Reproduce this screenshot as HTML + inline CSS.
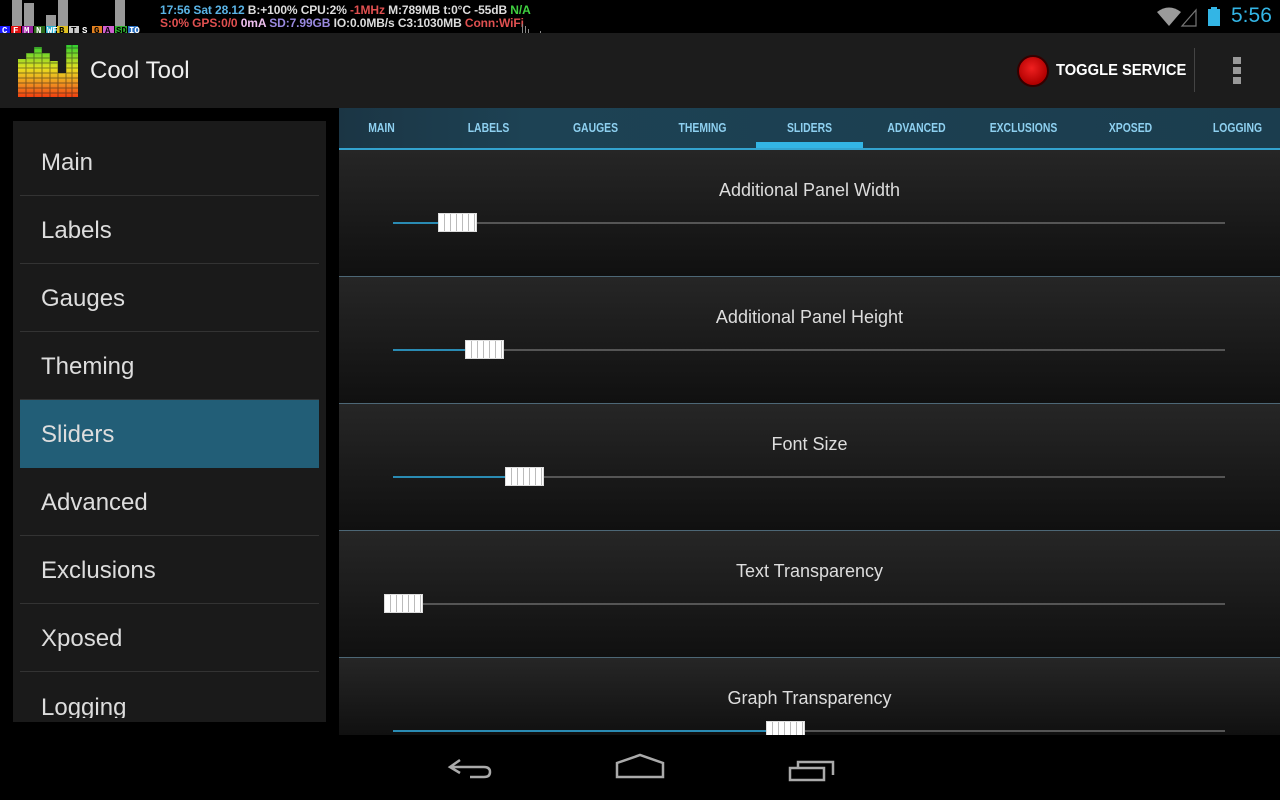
<!DOCTYPE html>
<html><head><meta charset="utf-8"><style>
*{margin:0;padding:0;box-sizing:border-box}
body{width:1280px;height:800px;background:#000;position:relative;overflow:hidden;font-family:"Liberation Sans",sans-serif}
.abs{position:absolute}
.sb{font-size:12px;font-weight:bold;white-space:nowrap;letter-spacing:-0.1px}
.ab{top:33px;left:0;width:1280px;height:75px;background:#1c1c1c}
.left{left:13px;top:121px;width:313px;height:601px;background:#1a1a1a;overflow:hidden}
.item{position:absolute;left:7px;width:299px;height:68px;border-bottom:1px solid #333;color:#ddd;font-size:24px;padding-left:21px;line-height:70px}
.sel{background:#225e77;border-bottom:none}
.tabs{left:339px;top:108px;width:941px;height:42px;background:linear-gradient(90deg,#1b3544,#1d4254 20%,#1b3d4e);border-bottom:2px solid #33a3cf}
.tab{position:absolute;top:0;width:107px;height:40px;line-height:40px;text-align:center;color:#8ed0f0;font-size:13px;font-weight:bold;transform:scaleX(.8)}
.panel{position:absolute;left:339px;width:941px;height:127px;background:linear-gradient(#262626,#101010);border-bottom:1px solid #4d6776}
.pt{position:absolute;top:30px;width:100%;text-align:center;color:#ddd;font-size:18px}
.track{position:absolute;left:54px;width:832px;top:72px;height:2px;background:#555}
.fill{position:absolute;left:0;top:0;height:2px;background:#2a8bb3}
.thumb{position:absolute;top:-9px;width:39px;height:19px;background:repeating-linear-gradient(90deg,#fff 0 5px,#bbb 5px 6px);border:1px solid #ddd}
</style></head><body>
<div class="abs" style="left:0;top:0;width:590px;height:33px;background:#000"></div>
<svg class="abs" style="left:0;top:0" width="160" height="34">
<g fill="#999">
<rect x="12" y="0" width="10" height="26"/><rect x="24" y="3" width="10" height="23"/><rect x="46" y="15" width="10" height="11"/><rect x="58" y="0" width="10" height="26"/><rect x="115" y="0" width="10" height="26"/>
</g>
<g font-family="Liberation Mono" font-size="9" font-weight="bold">
<rect x="0" y="26" width="10" height="8" fill="#1a1aff"/><rect x="11" y="26" width="10" height="8" fill="#e01010"/><rect x="22" y="26" width="11" height="8" fill="#9a1fa0"/><rect x="34" y="26" width="11" height="8" fill="#2a6a1a"/><rect x="46" y="26" width="10" height="8" fill="#2ab0d0"/><rect x="57" y="26" width="11" height="8" fill="#e0c020"/><rect x="69" y="26" width="10" height="8" fill="#ccc"/><rect x="92" y="26" width="10" height="8" fill="#e08020"/><rect x="103" y="26" width="11" height="8" fill="#d060d0"/><rect x="115" y="26" width="12" height="8" fill="#30b030"/><rect x="128" y="26" width="10" height="8" fill="#2a70c0"/>
<text x="2" y="33" fill="#fff">C</text><text x="13" y="33" fill="#fff">F</text><text x="24" y="33" fill="#fff">M</text><text x="36" y="33" fill="#fff">N</text><text x="47" y="33" fill="#fff">WF</text><text x="59" y="33" fill="#000">B</text><text x="71" y="33" fill="#000">T</text><text x="82" y="33" fill="#fff">S</text><text x="94" y="33" fill="#000">G</text><text x="105" y="33" fill="#000">A</text><text x="116" y="33" fill="#000">SD</text><text x="129" y="33" fill="#fff">IO</text>
</g></svg>
<div class="abs sb" style="left:160px;top:3px;color:#ddd"><span style="color:#5ab4e6">17:56 Sat 28.12</span> B:+100% CPU:2% <span style="color:#e05050">-1MHz</span> M:789MB t:0°C -55dB <span style="color:#40d040">N/A</span></div>
<div class="abs sb" style="left:160px;top:16px;color:#ddd"><span style="color:#e05050">S:0% GPS:0/0</span> <span style="color:#f0c0f0">0mA</span> <span style="color:#9a8ae0">SD:7.99GB</span> IO:0.0MB/s C3:1030MB <span style="color:#e05050">Conn:WiFi</span></div>
<svg class="abs" style="left:520px;top:20px" width="40" height="13"><g fill="#888"><rect x="2" y="4" width="1" height="9"/><rect x="5" y="6" width="1" height="7"/><rect x="8" y="9" width="1" height="4"/><rect x="20" y="11" width="1" height="2"/></g></svg>
<svg class="abs" style="left:1155px;top:6px" width="90" height="22">
<path d="M2 6 Q14 -3 26 6 L14 20 Z" fill="#9a9a9a"/>
<path d="M27 20 L41 4 L41 20 Z" fill="none" stroke="#777" stroke-width="1.2"/>
<rect x="53" y="3" width="12" height="17" fill="#33b5e5"/><rect x="56" y="1" width="6" height="3" fill="#33b5e5"/>
</svg>
<div class="abs" style="left:1231px;top:4px;color:#33b5e5;font-size:21px">5:56</div>
<div class="abs ab"></div>
<svg class="abs" style="left:16px;top:43px" width="64" height="56">
<defs><linearGradient id="lg" x1="0" y1="0" x2="0" y2="1"><stop offset="0" stop-color="#30d030"/><stop offset=".45" stop-color="#e8e020"/><stop offset=".75" stop-color="#f09020"/><stop offset="1" stop-color="#f04010"/></linearGradient></defs>
<path d="M2 54 L2 16 L10 16 L10 10 L18 10 L18 4 L26 4 L26 10 L34 10 L34 18 L42 18 L42 30 L50 30 L50 2 L62 2 L62 54 Z" fill="url(#lg)"/>
<g stroke="#1c1c1c" stroke-width="1" opacity=".5"><path d="M2 20H62M2 25H62M2 30H62M2 35H62M2 40H62M2 45H62M2 50H62M2 10H62M2 15H62M2 5H62M10 0V56M18 0V56M26 0V56M34 0V56M42 0V56M50 0V56M56 0V56"/></g>
</svg>
<div class="abs" style="left:90px;top:57px;color:#eee;font-size:24px">Cool Tool</div>
<div class="abs" style="left:1017px;top:55px;width:32px;height:32px;border-radius:50%;background:radial-gradient(circle at 45% 40%,#f02020,#b00000 70%);border:2px solid #300"></div>
<div class="abs" style="left:1056px;top:62px;color:#fff;font-size:16px;font-weight:bold;transform:scaleX(.92);transform-origin:left">TOGGLE SERVICE</div>
<div class="abs" style="left:1194px;top:48px;width:1px;height:44px;background:#444"></div>
<div class="abs" style="left:1233px;top:57px;width:8px;height:7px;background:#999"></div>
<div class="abs" style="left:1233px;top:67px;width:8px;height:7px;background:#999"></div>
<div class="abs" style="left:1233px;top:77px;width:8px;height:7px;background:#999"></div>
<div class="abs left">
<div class="item" style="top:7px">Main</div>
<div class="item" style="top:75px">Labels</div>
<div class="item" style="top:143px">Gauges</div>
<div class="item" style="top:211px">Theming</div>
<div class="item sel" style="top:279px">Sliders</div>
<div class="item" style="top:347px">Advanced</div>
<div class="item" style="top:415px">Exclusions</div>
<div class="item" style="top:483px">Xposed</div>
<div class="item" style="top:551px;border:none;line-height:72px">Logging</div>
<div class="abs" style="left:0;top:597px;width:313px;height:4px;background:#1a1a1a"></div>
</div>
<div class="abs tabs">
<div class="tab" style="left:-11px">MAIN</div>
<div class="tab" style="left:96px">LABELS</div>
<div class="tab" style="left:203px">GAUGES</div>
<div class="tab" style="left:310px">THEMING</div>
<div class="tab" style="left:417px">SLIDERS</div>
<div class="tab" style="left:524px">ADVANCED</div>
<div class="tab" style="left:631px">EXCLUSIONS</div>
<div class="tab" style="left:738px">XPOSED</div>
<div class="tab" style="left:845px">LOGGING</div>
<div class="abs" style="left:417px;top:34px;width:107px;height:6px;background:#33b5e5"></div>
</div>
<div class="panel" style="top:150px"><div class="pt">Additional Panel Width</div><div class="track"><div class="fill" style="width:50px"></div><div class="thumb" style="left:45px"></div></div></div>
<div class="panel" style="top:277px"><div class="pt">Additional Panel Height</div><div class="track"><div class="fill" style="width:75px"></div><div class="thumb" style="left:72px"></div></div></div>
<div class="panel" style="top:404px"><div class="pt">Font Size</div><div class="track"><div class="fill" style="width:115px"></div><div class="thumb" style="left:112px"></div></div></div>
<div class="panel" style="top:531px"><div class="pt">Text Transparency</div><div class="track"><div class="thumb" style="left:-9px"></div></div></div>
<div class="panel" style="top:658px;height:77px;border:none;overflow:hidden"><div class="pt">Graph Transparency</div><div class="track"><div class="fill" style="width:378px"></div><div class="thumb" style="left:373px"></div></div></div>
<svg class="abs" style="left:440px;top:750px" width="400" height="40" fill="none" stroke="#aaa" stroke-width="2.5">
<path d="M20 10 L10 17 L20 23 M10 17 H44 Q50 17 50 22 Q50 27 44 27 H30"/>
<path d="M177 27 V13 L200 5 L223 13 V27 Z"/>
<path d="M350 18 H384 V30 H350 Z M358 17 V12 H393 V25"/>
</svg>
</body></html>
